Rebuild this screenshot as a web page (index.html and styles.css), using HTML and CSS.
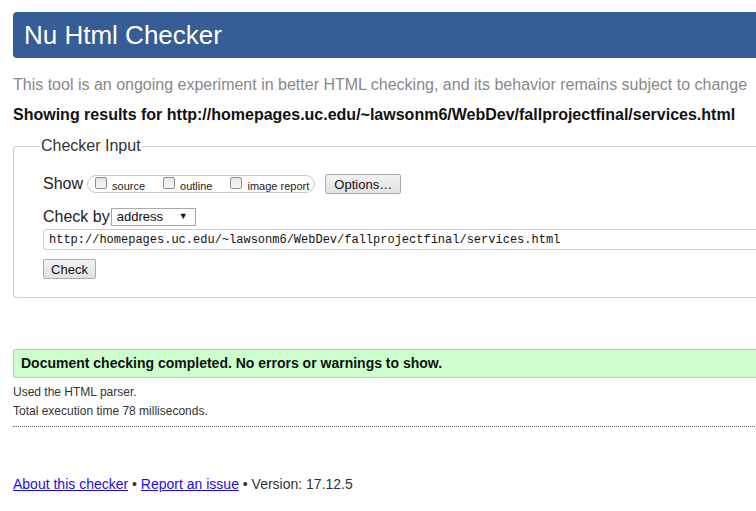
FILE: index.html
```html
<!DOCTYPE html>
<html lang="en">
<head>
<meta charset="utf-8">
<title>Nu Html Checker</title>
<link rel="stylesheet" href="styles.css">
</head>
<body>
<div class="page">
  <h1 class="title">Nu Html Checker</h1>
  <p class="intro">This tool is an ongoing experiment in better HTML checking, and its behavior remains subject to change</p>
  <p class="showing">Showing results for http://homepages.uc.edu/~lawsonm6/WebDev/fallprojectfinal/services.html</p>
  <form class="checker-form">
    <fieldset class="checker-input">
      <legend class="legend">Checker Input</legend>
      <div class="row show-row">
        <span class="row-label">Show</span>
        <span class="pill">
          <label class="opt"><input type="checkbox" class="cb"><span class="opt-text">source</span></label>
          <label class="opt"><input type="checkbox" class="cb"><span class="opt-text">outline</span></label>
          <label class="opt"><input type="checkbox" class="cb"><span class="opt-text">image report</span></label>
        </span>
        <button type="button" class="btn options-btn">Options…</button>
      </div>
      <div class="row checkby-row">
        <span class="row-label">Check by</span>
        <span class="select-wrap">
          <select class="select"><option>address</option></select>
          <span class="select-arrow">▼</span>
        </span>
      </div>
      <div class="url-row">
        <input class="url" type="text" value="http://homepages.uc.edu/~lawsonm6/WebDev/fallprojectfinal/services.html">
      </div>
      <div class="submit-row">
        <button type="button" class="btn check-btn">Check</button>
      </div>
    </fieldset>
  </form>
  <div class="success">Document checking completed. No errors or warnings to show.</div>
  <div class="details-block">
    <p class="details">Used the HTML parser.</p>
    <p class="details">Total execution time 78 milliseconds.</p>
  </div>
  <hr class="dotted">
  <p class="footer"><a href="#">About this checker</a> • <a href="#">Report an issue</a> • Version: 17.12.5</p>
</div>
</body>
</html>
```
FILE: styles.css
```css
html, body {
  margin: 0;
  padding: 0;
  overflow: hidden;
  background: #fff;
}
body {
  font-family: "Liberation Sans", Arial, sans-serif;
  color: #222;
}
.page {
  width: 820px;
  padding: 12px 0 0 13px;
}
.title {
  margin: 0;
  height: 46px;
  line-height: 46px;
  padding-left: 11px;
  background: #365d95;
  color: #fff;
  font-size: 26px;
  font-weight: normal;
  border-radius: 4px 0 0 4px;
}
.intro {
  margin: 17px 0 0;
  line-height: 20px;
  font-size: 16px;
  color: #888;
}
.showing {
  margin: 10px 0 0;
  line-height: 20px;
  font-size: 16px;
  font-weight: bold;
  color: #111;
}
.checker-form {
  margin: 11px 0 0;
}
.checker-input {
  margin: 0;
  padding: 18px 0 18px 29px;
  border: 1px solid #ccc;
  border-right: 0;
  border-radius: 4px 0 0 4px;
  min-width: 0;
}
.legend {
  padding: 0 1px;
  margin-left: -3px;
  font-size: 16px;
  line-height: 20px;
  color: #333;
}
.row {
  display: flex;
  align-items: center;
  height: 20px;
}
.row-label {
  font-size: 16px;
  color: #222;
}
.pill {
  display: inline-flex;
  align-items: center;
  height: 16px;
  margin-left: 4px;
  padding: 0 5px 0 7px;
  border: 1px solid #c8c8c8;
  border-radius: 9px;
  gap: 18px;
}
.opt {
  display: inline-flex;
  align-items: center;
  font-size: 11px;
  color: #222;
  gap: 5px;
}
.opt-text {
  padding-top: 3px;
}
.cb {
  appearance: none;
  -webkit-appearance: none;
  margin: 0 0 2px 0;
  width: 12px;
  height: 12px;
  border: 1px solid #8f8f8f;
  border-radius: 2px;
  background: linear-gradient(#e6e6e6, #f8f8f8);
  box-sizing: border-box;
}
.btn {
  font-family: "Liberation Sans", Arial, sans-serif;
  font-size: 13px;
  color: #111;
  height: 20px;
  padding: 0 8px;
  border: 1px solid #adadad;
  border-radius: 2px;
  background: linear-gradient(#f2f2f2, #e2e2e2);
}
.options-btn {
  margin-left: 10px;
  width: 76px;
}
.checkby-row {
  margin-top: 13px;
  height: 19px;
}
.select-wrap {
  position: relative;
  display: inline-block;
  margin-left: 1px;
}
.select {
  appearance: none;
  -webkit-appearance: none;
  display: block;
  width: 85px;
  height: 18px;
  padding: 0 0 0 5px;
  margin: 0;
  border: 1px solid #a9a9a9;
  border-radius: 0;
  background: #fff;
  font-family: "Liberation Sans", Arial, sans-serif;
  font-size: 13px;
  color: #111;
}
.select-arrow {
  position: absolute;
  right: 8px;
  top: 3px;
  font-size: 9px;
  color: #111;
  pointer-events: none;
}
.url-row {
  margin-top: 3px;
}
.url {
  display: block;
  width: 100%;
  box-sizing: border-box;
  height: 21px;
  margin: 0;
  padding: 0 0 0 5px;
  border: 1px solid #ccc;
  border-right: 0;
  border-radius: 4px 0 0 4px;
  font-family: "Liberation Mono", "Courier New", monospace;
  font-size: 12px;
  color: #111;
  outline: none;
}
.submit-row {
  margin-top: 9px;
}
.check-btn {
  width: 53px;
  padding: 0;
}
.success {
  margin-top: 51px;
  height: 27px;
  line-height: 27px;
  padding-left: 7px;
  background: #ccffcc;
  border: 1px solid #c6c6c6;
  border-right: 0;
  border-radius: 3px 0 0 3px;
  font-size: 14px;
  font-weight: bold;
  color: #111;
}
.details-block {
  margin-top: 5px;
}
.details {
  margin: 0;
  font-size: 12px;
  line-height: 19px;
  color: #333;
}
.dotted {
  margin: 5px 0 0;
  border: 0;
  border-top: 1px dotted #666;
  height: 0;
}
.footer {
  margin: 48px 0 0;
  font-size: 14px;
  line-height: 18px;
  color: #333;
}
.footer a {
  color: #1a0dee;
}
```
